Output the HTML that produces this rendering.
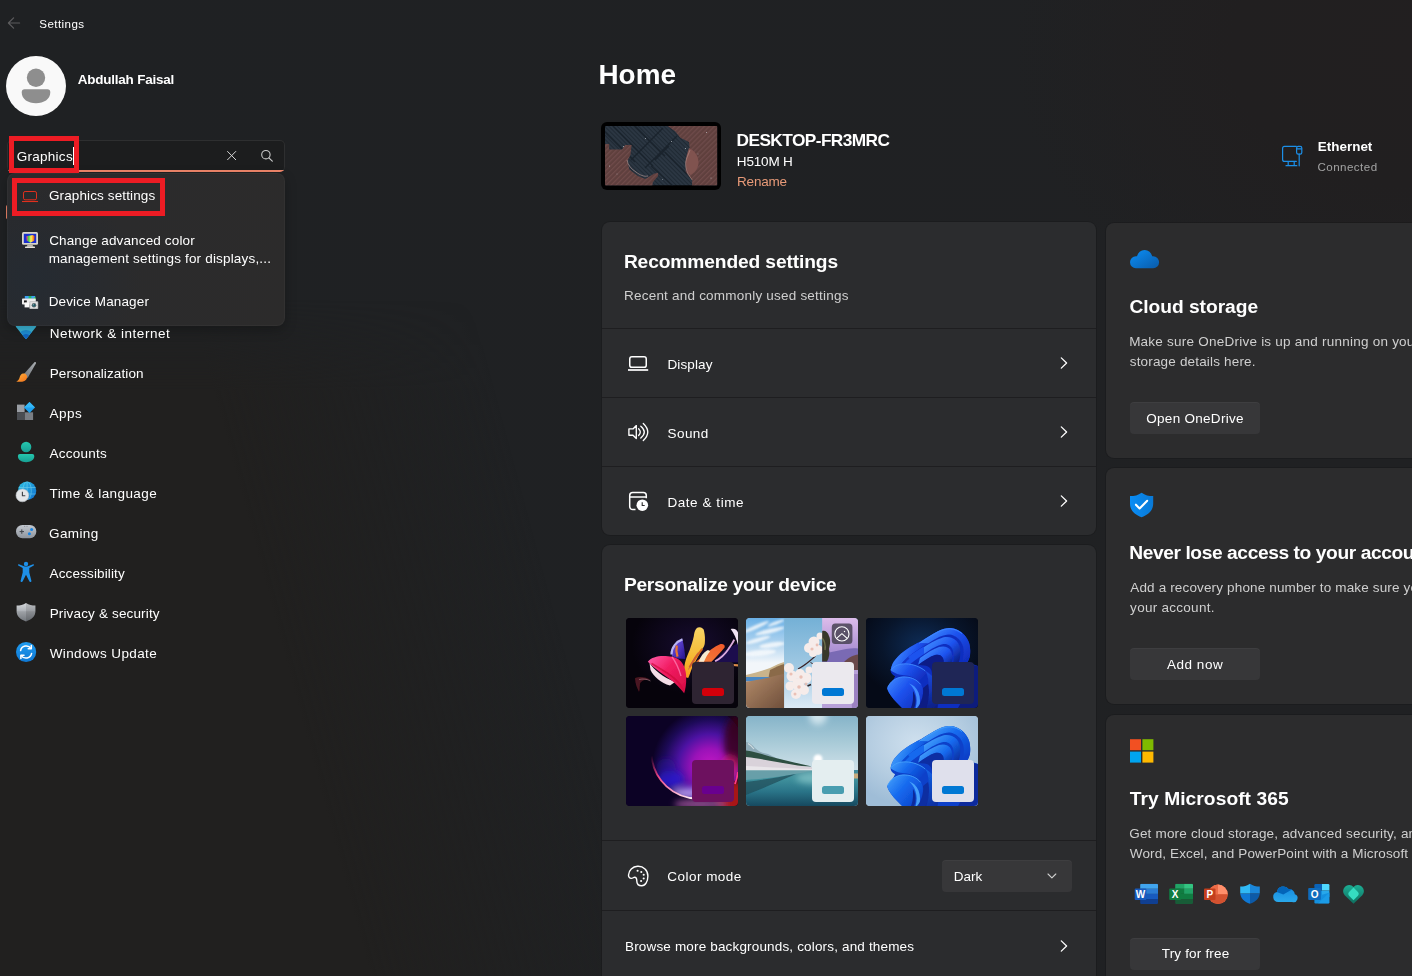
<!DOCTYPE html>
<html lang="en">
<head>
<meta charset="utf-8">
<title>Settings</title>
<style>
html,body{margin:0;padding:0}
body{width:1412px;height:976px;overflow:hidden;position:relative;background:#202020;font-family:"Liberation Sans",sans-serif;color:#fff}
#bg{position:absolute;left:0;top:0;width:1412px;height:976px;background:radial-gradient(ellipse 400px 300px at 1412px 50px,#221f20 0%,#211f20 45%,rgba(33,31,32,0) 100%),linear-gradient(90deg,#1f2123 0%,#202123 100%)}
#bg2{position:absolute;left:0;top:300px;width:700px;height:676px;background:linear-gradient(75deg,#21201f 0%,#21201f 42%,rgba(33,32,31,0) 74%);-webkit-mask-image:linear-gradient(180deg,transparent 0,#000 90px);mask-image:linear-gradient(180deg,transparent 0,#000 90px)}
.t{position:absolute;white-space:pre;line-height:1;color:#fff}
.abs{position:absolute}
#txt{position:absolute;left:0;top:0;width:1412px;height:976px;will-change:transform}
.card{position:absolute;background:#2b2c2e;border-radius:8px;box-shadow:0 0 0 1px rgba(0,0,0,.13)}
.div{position:absolute;height:1px;background:#1e1e20;left:602px;width:494px}
.btn{position:absolute;background:#373739;border-radius:4px;box-shadow:inset 0 1px 0 rgba(255,255,255,.04)}
.thumb{position:absolute;width:112px;height:90px;border-radius:4px;overflow:hidden}
.mini{position:absolute;left:66px;top:44px;width:42px;height:42px;border-radius:4px}
.mini i{position:absolute;left:10px;top:26px;width:22px;height:8px;border-radius:2.5px}
svg{position:absolute;overflow:visible}

</style>
</head>
<body>
<div id="bg"></div><div id="bg2"></div>

<!-- ===== main cards ===== -->
<div class="card" style="left:602px;top:222px;width:494.300px;height:313px"></div>
<div class="div" style="top:328px"></div>
<div class="div" style="top:397px"></div>
<div class="div" style="top:466px"></div>
<div class="card" style="left:602px;top:545px;width:494.300px;height:440px"></div>
<div class="div" style="top:840px"></div>
<div class="div" style="top:910px"></div>
<div class="card" style="left:1105.500px;top:223px;width:320px;height:235.300px;background:#2c2c2d"></div>
<div class="card" style="left:1105.500px;top:468.300px;width:320px;height:235.700px;background:#2c2c2d"></div>
<div class="card" style="left:1105.500px;top:715px;width:320px;height:280px;background:#2c2c2d"></div>

<!-- buttons -->
<div class="btn" style="left:1130px;top:402px;width:130px;height:32px"></div>
<div class="btn" style="left:1130px;top:648px;width:130px;height:32px"></div>
<div class="btn" style="left:1130px;top:938px;width:130px;height:32px"></div>
<div class="btn" style="left:942px;top:860px;width:130px;height:32px"></div>

<!-- ===== main icons (page-coordinate svg) ===== -->
<svg style="left:0;top:0" width="1412" height="976" viewBox="0 0 1412 976" fill="none">
<defs>
<linearGradient id="gCloud" x1="0" y1="0" x2="1" y2="1"><stop offset="0" stop-color="#0b8ff7"/><stop offset="1" stop-color="#0a5aa8"/></linearGradient>
<linearGradient id="gShield" x1="0" y1="0" x2="1" y2="0"><stop offset="0" stop-color="#0a8df5"/><stop offset="1" stop-color="#0979d6"/></linearGradient>
</defs>
<!-- back arrow -->
<path d="M19.6 23H8.6M13.6 17.8L8.4 23l5.2 5.2" stroke="#5c5c5e" stroke-width="1.2" stroke-linecap="round" stroke-linejoin="round"/>
<!-- ethernet -->
<g stroke="#1c8fe8" stroke-width="1.2" stroke-linecap="round" stroke-linejoin="round">
<path d="M1296.3 146.4H1284.6a2 2 0 0 0-2 2v11a2 2 0 0 0 2 2h11.7"/>
<path d="M1288.2 161.6v4M1294.2 161.6v4M1286 165.7h10.8"/>
<rect x="1296.6" y="146.3" width="5.2" height="7.8" rx="1.6"/>
<path d="M1297 148.9h4.4M1299.2 154.2v11.6"/>
</g>
<!-- display -->
<rect x="629.75" y="356.75" width="16.5" height="10.6" rx="2.2" stroke="#fff" stroke-width="1.5"/>
<path d="M628 370h20.2" stroke="#fff" stroke-width="1.7"/>
<!-- sound -->
<g stroke="#fff" stroke-width="1.35" stroke-linejoin="round" stroke-linecap="round">
<path d="M628.9 428.9h4.1l3.3-3.3v12.9l-3.3-3.3h-4.1z"/>
<path d="M638.6 428.7Q642 432 638.6 435.5M640.8 426.2Q647.8 432 640.8 438M643.3 423.4Q652.2 432 643.3 440.5"/>
</g>
<!-- date & time -->
<path d="M635.5 509.55H632.7a3 3 0 0 1-3-3V495.5a3 3 0 0 1 3-3h10.6a3 3 0 0 1 3 3v2.7M629.9 496.9h16.2" stroke="#fff" stroke-width="1.5"/>
<circle cx="642.3" cy="505.2" r="5.8" fill="#fff"/>
<path d="M642.2 502.3v3.2h2.5" stroke="#2b2b2d" stroke-width="1.1"/>
<!-- chevrons -->
<g stroke="#fff" stroke-width="1.3" stroke-linecap="round" stroke-linejoin="round">
<path d="M1061.3 357.9l5.3 5.1-5.3 5.1"/>
<path d="M1061.3 426.9l5.3 5.1-5.3 5.1"/>
<path d="M1061.3 495.9l5.3 5.1-5.3 5.1"/>
<path d="M1061.3 940.9l5.3 5.1-5.3 5.1"/>
</g>
<path d="M1048 874l3.9 3.9 3.9-3.9" stroke="#cfcfcf" stroke-width="1.1" stroke-linecap="round" stroke-linejoin="round"/>
<!-- palette -->
<path d="M637.6 866.3C643.5 866 648 870.5 647.9 876C647.8 881.5 645.5 885.8 641.8 885.8C638.5 885.8 636.8 883.8 636.8 881C636.8 879 636.6 877.4 635 877.2C633.5 877 633 878.4 631.4 878.4C629.5 878.4 628.4 876.8 628.5 875C628.8 870.5 632.5 866.5 637.6 866.3Z" stroke="#fff" stroke-width="1.4"/>
<g fill="#fff"><circle cx="637.6" cy="870.8" r="1.05"/><circle cx="641.3" cy="872" r="1.05"/><circle cx="643.7" cy="874.8" r="1.05"/><circle cx="643.7" cy="878.5" r="1.05"/><circle cx="641.1" cy="881" r="1.05"/></g>
<!-- cloud -->
<path d="M1136 268.3a6 6 0 0 1 0-12h1.1a7.6 7.6 0 0 1 15 0h1a6 6 0 0 1 0 12z" fill="url(#gCloud)"/>
<!-- shield -->
<path d="M1141.6 492.8c3.4 2.6 7.2 3.3 11.6 3.3v7.4c0 7-4.6 11.2-11.6 13.7c-7-2.500-11.600-6.700-11.600-13.700v-7.400c4.400 0 8.200-.7 11.600-3.300z" fill="url(#gShield)"/>
<path d="M1135.900 504.700l3.700 3.700 7.600-7.600" stroke="#fff" stroke-width="2.1" stroke-linecap="round" stroke-linejoin="round"/>
<!-- microsoft logo -->
<rect x="1130" y="739.200" width="11" height="11" fill="#f25022"/><rect x="1142.400" y="739.200" width="11" height="11" fill="#7fba00"/>
<rect x="1130" y="751.600" width="11" height="11" fill="#00a4ef"/><rect x="1142.400" y="751.600" width="11" height="11" fill="#ffb900"/>
</svg>

<!-- ===== office icons ===== -->
<svg style="left:0;top:0" width="1412" height="976" viewBox="0 0 1412 976">
<defs>
<linearGradient id="gOD" x1="0" y1="0" x2="0" y2="1"><stop offset="0" stop-color="#1588dd"/><stop offset="1" stop-color="#2aa9ec"/></linearGradient>
<linearGradient id="gFam" x1="0" y1="0" x2="0" y2="1"><stop offset="0" stop-color="#1cae94"/><stop offset="1" stop-color="#0f6d5e"/></linearGradient>
<clipPath id="cW"><rect x="1140.200" y="883.700" width="17.800" height="20.300" rx="1.200"/></clipPath>
<clipPath id="cX"><rect x="1175.200" y="883.700" width="17.800" height="20.300" rx="1.200"/></clipPath>
<clipPath id="cP"><circle cx="1218" cy="894.300" r="9.700"/></clipPath>
<clipPath id="cD"><path d="M1250 883.700c2.900 2 6 2.900 9.800 2.900v5.900c0 5.700-3.900 9.200-9.800 11.300c-5.900-2.100-9.800-5.600-9.800-11.300v-5.900c3.800 0 6.900-.9 9.800-2.900z"/></clipPath>
<clipPath id="cO"><rect x="1314.400" y="884" width="15" height="19.500" rx="1.200"/></clipPath>
</defs>
<!-- word -->
<g clip-path="url(#cW)"><rect x="1140" y="883.700" width="18.200" height="5.100" fill="#41a5ee"/><rect x="1140" y="888.800" width="18.200" height="5.100" fill="#2b7cd3"/><rect x="1140" y="893.900" width="18.200" height="5.100" fill="#185abd"/><rect x="1140" y="899" width="18.200" height="5.100" fill="#103f91"/></g>
<rect x="1134.700" y="888.400" width="11.700" height="11.600" rx="1" fill="#185abd"/>
<text x="1140.550" y="898" font-family="Liberation Sans, sans-serif" font-size="10" font-weight="700" fill="#fff" text-anchor="middle">W</text>
<!-- excel -->
<g clip-path="url(#cX)"><rect x="1175" y="883.700" width="9.200" height="5.100" fill="#21a366"/><rect x="1184.100" y="883.700" width="9.200" height="5.100" fill="#33c481"/><rect x="1175" y="888.800" width="9.200" height="5.100" fill="#107c41"/><rect x="1184.100" y="888.800" width="9.200" height="5.100" fill="#21a366"/><rect x="1175" y="893.900" width="18.200" height="5.100" fill="#107c41"/><rect x="1175" y="899" width="18.200" height="5.100" fill="#185c37"/></g>
<rect x="1169.200" y="888.400" width="11.700" height="11.600" rx="1" fill="#107c41"/>
<text x="1175.050" y="898" font-family="Liberation Sans, sans-serif" font-size="10" font-weight="700" fill="#fff" text-anchor="middle">X</text>
<!-- powerpoint -->
<g clip-path="url(#cP)"><rect x="1208" y="884" width="20" height="21" fill="#ed6c47"/><rect x="1218" y="884" width="10" height="10.300" fill="#ff8f6b"/><rect x="1208" y="894.300" width="20" height="10" fill="#d35230"/><rect x="1208" y="884" width="10" height="10.300" fill="#ed6c47"/></g>
<rect x="1204" y="888.400" width="11.500" height="11.600" rx="1" fill="#c43e1c"/>
<text x="1209.750" y="898" font-family="Liberation Sans, sans-serif" font-size="10" font-weight="700" fill="#fff" text-anchor="middle">P</text>
<!-- defender -->
<g clip-path="url(#cD)"><rect x="1240" y="883" width="10" height="10.600" fill="#30b9f5"/><rect x="1250" y="883" width="10" height="10.600" fill="#1a86d9"/><rect x="1240" y="893.600" width="10" height="11" fill="#0f78d4"/><rect x="1250" y="893.600" width="10" height="11" fill="#0d5aa7"/></g>
<!-- onedrive -->
<path d="M1278.200 902a5.100 5.100 0 0 1-1.300-10a6.600 6.600 0 0 1 11.900-2.800a5.300 5.300 0 0 1 6 5.100a4 4 0 0 1-2.700 7.700z" fill="url(#gOD)"/>
<path d="M1276.900 892a6.600 6.600 0 0 1 11.900-2.800a5.300 5.300 0 0 1 3.500.1l-9 5.100z" fill="#0364b8"/>
<!-- outlook -->
<g clip-path="url(#cO)"><rect x="1314" y="884" width="8" height="6.500" fill="#0a63b8"/><rect x="1322" y="884" width="8" height="6.500" fill="#50d9ff"/><rect x="1314" y="890.500" width="8" height="6.500" fill="#1490df"/><rect x="1322" y="890.500" width="8" height="6.500" fill="#28a8ea"/><path d="M1314 897l16-4.500v11.500h-16z" fill="#1490df"/><path d="M1318 903.500l11.400-11v11z" fill="#1b9be6"/></g>
<rect x="1308.200" y="888.100" width="12.700" height="11.800" rx="1" fill="#0f6cbd"/>
<text x="1314.550" y="897.800" font-family="Liberation Sans, sans-serif" font-size="10" font-weight="700" fill="#fff" text-anchor="middle">O</text>
<!-- family safety heart -->
<path d="M1353.500 903.800l-8.800-8.600a6 6 0 0 1 8.800-8.200a6 6 0 0 1 8.800 8.200z" fill="url(#gFam)"/>
<path d="M1353.500 887.500l4.200 4.300a3 3 0 0 1 0 4.200l-4.200 4.200-4.200-4.200a3 3 0 0 1 0-4.200z" fill="#35dcc0"/>
</svg>

<!-- ===== desktop preview ===== -->
<div class="abs" style="left:601px;top:122px;width:120px;height:67.500px;border-radius:6px;background:#000"></div>
<svg style="left:605px;top:126px" width="112.400" height="59.600" viewBox="0 0 112.400 59.600">
<defs>
<pattern id="pDiag" width="3" height="3" patternUnits="userSpaceOnUse" patternTransform="rotate(45)"><rect width="3" height="3" fill="#2b3642"/><rect width="3" height="1" fill="#1f2933"/></pattern>
<pattern id="pDiag2" width="3.500" height="3.500" patternUnits="userSpaceOnUse" patternTransform="rotate(-45)"><rect width="3.500" height="3.500" fill="#5f3f3e"/><rect width="3.500" height="1.200" fill="#704c4a"/></pattern>
<filter id="fS"><feGaussianBlur stdDeviation=".35"/></filter>
<clipPath id="cDesk"><rect width="112.400" height="59.600" rx="1"/></clipPath>
</defs>
<g clip-path="url(#cDesk)">
<rect width="112.400" height="59.600" fill="url(#pDiag)"/>
<g stroke="#18212a" stroke-width="1.400" opacity=".8"><path d="M0 6l30 30M8 0l40 40M30 0l30 30M58 2L26 34M72 10L40 42M46 40l22 20M60 26l22 22M50 34l14-14"/></g>
<g filter="url(#fS)">
<path d="M62.700 0L70.100 5.300 75.400 11.700 83.900 15.900 85 24.400 80.700 35.100 80.700 45.700 87.100 54.200 87.100 59.700H112.400V0z" fill="url(#pDiag2)"/>
<path d="M84 22c5 2 10 8 9.500 15c-.4 6-4 10-8 12c-3-3-5-8-4.800-13c.2-5 2-10 3.300-14z" fill="#80524f"/>
<path d="M0 18.100L4.200 18.100 4.200 23.400 17 23.400 20.200 19.100 26.600 19.100 25.500 28.700 22.300 35.100 24.400 43.600 32.900 49.900 40.400 53.100 48.900 47.800 53.100 46.700 53.100 49.900 47.800 56.300 47.300 59.700H0z" fill="url(#pDiag2)"/>
<path d="M22 34c1 5 4 9 9 12c4 3 8 5 12 4" stroke="#c9a9a4" stroke-width=".8" fill="none" opacity=".7"/>
<path d="M85 24c-2 6-5 10-4.300 16c.5 5 3 9 6.500 14" stroke="#c9a9a4" stroke-width=".8" fill="none" opacity=".55"/>
</g>
<g fill="#dfe6ec" opacity=".75"><circle cx="40.500" cy="12.600" r=".5"/><circle cx="66.500" cy="15.500" r=".5"/><circle cx="80.500" cy="22.500" r=".55"/><circle cx="18.500" cy="20.500" r=".5"/><circle cx="57.500" cy="53.500" r=".45"/><circle cx="101.500" cy="6.500" r=".5"/><circle cx="106" cy="52" r=".5"/><circle cx="4.500" cy="40" r=".5"/><circle cx="93" cy="28" r=".4"/><circle cx="12" cy="48" r=".4"/></g>
</g>
</svg>

<!-- ===== personalize thumbnails ===== -->
<svg width="0" height="0" style="left:0;top:0"><defs>
<filter id="fB1" x="-10%" y="-10%" width="120%" height="120%"><feGaussianBlur stdDeviation=".55"/></filter>
<filter id="fB2" x="-20%" y="-20%" width="140%" height="140%"><feGaussianBlur stdDeviation="1.300"/></filter>
<filter id="fB3" x="-30%" y="-30%" width="160%" height="160%"><feGaussianBlur stdDeviation="3"/></filter>
</defs></svg>

<!-- thumb 1: colourful bloom on black -->
<div class="thumb" style="left:626px;top:618px;background:#06030b">
<svg width="112" height="90" viewBox="0 0 112 90" style="left:0;top:0">
<defs>
<radialGradient id="t1bg" cx=".6" cy=".3" r=".55"><stop offset="0" stop-color="#170c30"/><stop offset="1" stop-color="#06030b"/></radialGradient>
<linearGradient id="t1pink" x1="22" y1="40" x2="58" y2="72" gradientUnits="userSpaceOnUse"><stop offset="0" stop-color="#ff5aa8"/><stop offset=".45" stop-color="#f21c62"/><stop offset="1" stop-color="#d80f48"/></linearGradient>
<linearGradient id="t1yel" x1="0" y1="0" x2="0" y2="1"><stop offset="0" stop-color="#f8d465"/><stop offset=".6" stop-color="#f6b832"/><stop offset="1" stop-color="#f59a1e"/></linearGradient>
<linearGradient id="t1or" x1="1" y1="0" x2="0" y2="1"><stop offset="0" stop-color="#f0582a"/><stop offset="1" stop-color="#f4803a"/></linearGradient>
<linearGradient id="t1vi" x1="0" y1="0" x2="1" y2="1"><stop offset="0" stop-color="#7a5af0"/><stop offset="1" stop-color="#24128a"/></linearGradient>
</defs>
<rect width="112" height="90" fill="url(#t1bg)"/>
<g filter="url(#fB1)">
<!-- far right: deep purple, lilac line, white curl -->
<path d="M98 33L112 25V44.500L88 44Z" fill="#1c0a4e"/>
<path d="M104.700 11.100C108 9.800 111 11.500 112 14.500V27C110.500 21 108 15.500 104.700 11.100Z" fill="#f1e4f3"/>
<path d="M89.100 43.300C95 40 99.500 35.500 102.500 30.900C105 27.500 107 24.500 108.200 21.700" stroke="#dcaadc" stroke-width="1.800" fill="none"/>
<path d="M100 45.500l12 .8v2.200l-10-1z" fill="#d98a4a"/>
<!-- blue/violet petal -->
<path d="M56.500 21.400C58 28 59 35 59.300 41L52 40.500 45.900 38C45.300 31 50 24 56.500 21.400Z" fill="url(#t1vi)"/>
<path d="M56.500 21.400C50.500 23.500 45.300 29.500 45.500 36.500" stroke="#b9b4f4" stroke-width="2.200" fill="none"/>
<path d="M50.800 27.400C50 31 50.300 35 51.500 38.700" stroke="#e8742e" stroke-width="2.200" fill="none"/>
<!-- orange petal + cream -->
<path d="M94 26.300C97 25.500 99.500 27 98.600 29.500C95 34 90 39 85.500 43.700H70L77.700 37.500C83 33 88.500 28.500 94 26.300Z" fill="url(#t1or)"/>
<path d="M72.800 43.700C74.500 38.500 77.500 34.500 81.300 32.300C82.500 32 83.500 32.500 84 33.500C81.500 36.500 79.500 40 78 43.700Z" fill="#f7ead0"/>
<!-- yellow petal -->
<path d="M67.800 18.200C68.500 12.500 70.500 9.300 73.100 9.300C76 9.300 78 11 78.100 13.200C79 17 79.200 21 78.800 25.200C78.500 27.500 77.500 29.500 76.300 30.900C73 37 69 44 66 50C64.500 54 63.500 57.500 62.200 60C59.500 60 57.500 57.500 57.900 53.600C58 50 58.500 46.500 59.300 43.700C60.500 39.500 62 36 63.600 32.300C65.300 27.500 66.800 23 67.800 18.200Z" fill="url(#t1yel)"/>
<path d="M76.300 30.900C72 36 67.500 42.500 63.600 49.300" stroke="#d4601c" stroke-width="2.200" fill="none" opacity=".9"/>
<path d="M72 34.500C68.500 39.500 65 45.500 62.500 51.500" stroke="#b8485a" stroke-width="1" fill="none" opacity=".65"/>
<!-- white underside + dark curl -->
<path d="M23.500 45C28 52 37 59 49 64L44 67.500C35 65 27.500 58.500 24.500 52Z" fill="#f3dde6"/>
<path d="M9 60C14 58 20 59 25 62C20 61 15 62 14 66C13.500 69 14 72 13 74C11 70 9 65 9 60Z" fill="#4a1520"/>
<path d="M13 61.500C17 60.500 21 61 24.500 63" stroke="#c8a0a8" stroke-width=".7" fill="none" opacity=".7"/>
<!-- pink petal -->
<path d="M21.800 43.700C23.500 41.500 25.800 40 28.200 39.400C31 38.500 34 38 37.400 38C40.500 38 43.500 38.200 45.900 38.700C49 39.300 51.500 40.500 53.700 42.200C55.500 43.800 57 45.800 57.900 47.900C59.500 52 60.300 56 60.200 60.200C60.300 66 59.500 71 58.200 75.300C54 70 49.500 65.500 45 62C38 57 29 51 21.800 43.700Z" fill="url(#t1pink)"/>
<path d="M25.500 45.500C32 49.500 39.500 53.500 46 58.500C51 62.500 55 67 57.800 72.500" stroke="#cf0a3a" stroke-width="1.800" fill="none" opacity=".7"/>
<path d="M45.900 38.700C50 44.500 53 51 55 58" stroke="#ff86ba" stroke-width="1.400" fill="none" opacity=".7"/>
</g>
</svg>
<div class="mini" style="background:#2e2432"><i style="background:#d3000a"></i></div>
</div>

<!-- thumb 2: spotlight collage -->
<div class="thumb" style="left:746px;top:618px;background:#8fbfe0">
<svg width="112" height="90" viewBox="0 0 112 90" style="left:0;top:0">
<defs>
<linearGradient id="t2a" x1="0" y1="0" x2="0" y2="1"><stop offset="0" stop-color="#6ab0e6"/><stop offset=".3" stop-color="#b4d6f0"/><stop offset=".5" stop-color="#f2f6fa"/></linearGradient>
<linearGradient id="t2b" x1="0" y1="0" x2="0" y2="1"><stop offset="0" stop-color="#74b0d6"/><stop offset=".6" stop-color="#a5cbe4"/><stop offset="1" stop-color="#dceaf5"/></linearGradient>
<linearGradient id="t2c" x1="0" y1="0" x2="0" y2="1"><stop offset="0" stop-color="#dcbcea"/><stop offset=".35" stop-color="#ad92d4"/><stop offset="1" stop-color="#b9a2da"/></linearGradient>
<linearGradient id="t2sand" x1="0" y1="0" x2="1" y2="1"><stop offset="0" stop-color="#b48c6a"/><stop offset="1" stop-color="#6f4f3b"/></linearGradient>
</defs>
<rect x="0" y="0" width="38.200" height="90" fill="url(#t2a)"/>
<g filter="url(#fB2)" opacity=".85" fill="#f6f9fc"><ellipse cx="10" cy="9" rx="14" ry="1.800" transform="rotate(-24 10 9)"/><ellipse cx="24" cy="13" rx="15" ry="2.200" transform="rotate(-14 24 13)"/><ellipse cx="12" cy="22" rx="13" ry="2" transform="rotate(-16 12 22)"/><ellipse cx="26" cy="27" rx="13" ry="2.600" transform="rotate(-8 26 27)"/><ellipse cx="14" cy="35" rx="16" ry="3" transform="rotate(-6 14 35)"/><ellipse cx="30" cy="5" rx="9" ry="1.500" transform="rotate(-20 30 5)"/></g>
<g filter="url(#fB1)">
<path d="M0 57C8 55 16 53 24 50C30 47 34 45 38.200 44V62H0Z" fill="#c9b48c"/>
<path d="M24 52C30 49 34 47 38.200 46V62L22 62Z" fill="#8a6a4a"/>
<rect x="0" y="59" width="24" height="4.500" fill="#4a88c4"/>
<path d="M0 63.500C8 62.500 16 61 23 59.500C28 58 33 57 38.200 56V90H0Z" fill="url(#t2sand)"/>
</g>
<rect x="38.200" y="0" width="38" height="90" fill="url(#t2b)"/>
<g filter="url(#fB1)">
<path d="M69.500 38C64 43 58 48 52 51" stroke="#3a2226" stroke-width="1.100" fill="none"/>
<path d="M64.500 44.500l2.500 1.300" stroke="#3a2226" stroke-width="1"/>
<g fill="#f6ecea"><circle cx="63" cy="30" r="5"/><circle cx="68" cy="24" r="5.500"/><circle cx="72" cy="32" r="5"/><circle cx="67" cy="35" r="4"/><circle cx="74" cy="18" r="3.500"/>
<circle cx="43" cy="50" r="5"/><circle cx="46" cy="58" r="5.500"/><circle cx="54" cy="56" r="5"/><circle cx="60" cy="60" r="5.500"/><circle cx="52" cy="66" r="6"/><circle cx="44" cy="68" r="4.500"/><circle cx="58" cy="72" r="5"/><circle cx="50" cy="76" r="5"/><circle cx="63" cy="52" r="3.500"/></g>
<g fill="#e8b9ac" opacity=".85"><circle cx="66" cy="31" r="1.600"/><circle cx="71" cy="27" r="1.400"/><circle cx="45" cy="56" r="1.600"/><circle cx="55" cy="59" r="1.700"/><circle cx="53" cy="69" r="1.800"/><circle cx="60" cy="66" r="1.500"/><circle cx="49" cy="76" r="1.500"/></g>
<path d="M61.500 68l3.500-1.500" stroke="#2a2226" stroke-width="1.600"/>
</g>
<rect x="76.200" y="0" width="36" height="90" fill="url(#t2c)"/>
<g filter="url(#fB1)">
<path d="M76.200 36C84 34 92 33 100 31C105 30 109 30 112 30.500V52H76.200Z" fill="#7a6ab4"/>
<path d="M98 44C103 39 108 37 112 36.500V56L100 54Z" fill="#6a4a4c"/>
<path d="M76.200 52H112V90H76.200Z" fill="#b7a0d8"/><path d="M104 56h8v34h-6z" fill="#8f74b8" opacity=".7"/>
<path d="M76.200 13C79 12 82 14 83 18C85 22 84 27 83 31C84 35 83 40 81 43.500H76.200Z" fill="#38392a"/>
<path d="M76.200 20C78 22 80 27 79 32" stroke="#6a6e4a" stroke-width="1.400" fill="none"/>
</g>
<rect x="85.800" y="5.500" width="20.600" height="20.600" rx="3.500" fill="#4c4658" opacity=".88"/>
<circle cx="95.900" cy="15.900" r="7.100" fill="none" stroke="#fff" stroke-width="1.100"/>
<path d="M90.600 20.300l5.300-4.600 5.300 4.600" fill="none" stroke="#fff" stroke-width="1.100" stroke-linejoin="round"/>
<circle cx="98.500" cy="13.500" r=".7" fill="#fff"/>
</svg>
<div class="mini" style="background:#ebe9ee"><i style="background:#0078d4"></i></div>
</div>

<!-- thumb 3: bloom dark -->
<div class="thumb t3" style="left:866px;top:618px;background:#060c1a">
<svg width="112" height="90" viewBox="0 0 112 90" style="left:0;top:0">
<defs><radialGradient id="t3bg" cx=".5" cy=".3" r=".6"><stop offset="0" stop-color="#0e2c56"/><stop offset=".6" stop-color="#08152b"/><stop offset="1" stop-color="#050a17"/></radialGradient><linearGradient id="t3_a" gradientUnits="userSpaceOnUse" x1="60" y1="15" x2="90" y2="50"><stop offset="0" stop-color="#3f8bff"/><stop offset="0.45" stop-color="#1d52ee"/><stop offset="1" stop-color="#112fc0"/></linearGradient><linearGradient id="t3_b" gradientUnits="userSpaceOnUse" x1="62" y1="22" x2="88" y2="50"><stop offset="0" stop-color="#3f8bff"/><stop offset="0.5" stop-color="#1d52ee"/><stop offset="1" stop-color="#091a7c"/></linearGradient><linearGradient id="t3_c" gradientUnits="userSpaceOnUse" x1="64" y1="28" x2="84" y2="50"><stop offset="0" stop-color="#3f8bff"/><stop offset="0.55" stop-color="#1d52ee"/><stop offset="1" stop-color="#091a7c"/></linearGradient><linearGradient id="t3_d" gradientUnits="userSpaceOnUse" x1="30" y1="40" x2="55" y2="62"><stop offset="0" stop-color="#3f8bff"/><stop offset="0.5" stop-color="#1d52ee"/><stop offset="1" stop-color="#112fc0"/></linearGradient><linearGradient id="t3_e" gradientUnits="userSpaceOnUse" x1="22" y1="60" x2="55" y2="88"><stop offset="0" stop-color="#3f8bff"/><stop offset="0.45" stop-color="#1d52ee"/><stop offset="1" stop-color="#112fc0"/></linearGradient><linearGradient id="t3_f" gradientUnits="userSpaceOnUse" x1="30" y1="30" x2="58" y2="44"><stop offset="0" stop-color="#3f8bff"/><stop offset="0.6" stop-color="#1d52ee"/><stop offset="1" stop-color="#112fc0"/></linearGradient><linearGradient id="t3_g" gradientUnits="userSpaceOnUse" x1="58" y1="50" x2="76" y2="90"><stop offset="0" stop-color="#1d52ee"/><stop offset="1" stop-color="#091a7c"/></linearGradient></defs>
<rect width="112" height="90" fill="url(#t3bg)"/>
<g filter="url(#fB1)"><!--bloom--><path fill="#112fc0" d="M21.1 70.3C24 67 27.5 62 29.1 58.2C26 56.5 24.6 54.5 24.6 52.2C25.5 47.5 27 44 29.6 41.2C33 37 37 34 41.2 31.1C46 28 50.5 25.5 55.2 23.1C61 19.5 66.5 16 72.3 13.1C76 11.2 80 10 84.3 10C89.5 10.5 93.5 12.3 96.4 15.1C100 18.5 102.3 22 103.4 26.1C104.3 30 104.5 34 103.9 38.2C103.3 40.5 102.5 42.5 101.4 44.2L112 48V90H36.1C32 86 28.5 82.5 26.1 79.3C23.5 76 21.8 73 21.1 70.3Z"/><path fill="#091a7c" d="M96 45L112 48V90H92C98 80 101 68 101 58C101 52 99 48 96 45Z"/><path fill="url(#t3_a)" d="M52 26C58 21.500 65 17 72.300 13.100C76 11.200 80 10 84.300 10C89.500 10.500 93.500 12.300 96.400 15.100C100 18.500 102.300 22 103.400 26.100C104.300 30 104.500 34 103.900 38.200C103.300 40.500 102.500 42.500 101.400 44.200L96 47C98 40 98.500 33 97 28C95 22 90.500 17.500 84 16.500C78 16 70 20 62 25.500Z"/><path fill="url(#t3_b)" d="M55 31C62 26 70 21.500 77 19.500C82 18.300 87 19.500 90.500 23C94 27 95 33 94 39.500C93.500 42.500 92.500 45 91 47.500L86 49C88 43 88.500 37 87 32.500C85.500 28 82 25.500 77.500 26C72 26.800 65 31 58 36Z"/><path fill="url(#t3_c)" d="M54 40C60 35.500 67 31 73 29C77.500 27.700 81.500 28.500 84 31.500C86.500 35 87 40 85.500 46C85 48 84 50 83 51.500L76 53C78 48 78.500 43.500 77 40C75.500 37 72.500 36 69 37C64 38.500 58 42.500 52 47Z"/><path fill="#091a7c" opacity=".85" d="M52 47C58 42.500 64 38.500 69 37C72.500 36 75.500 37 77 40C78.500 43.500 78 48 76 53L66 56C66 51 63 48 58 47.500Z"/><path fill="url(#t3_f)" d="M29.600 41.200C33 37 37 34 41.200 31.100C45.500 28.300 49 26.300 52 24.800L62 25.500C55 29.500 48 34 42 39C38 42.500 35 46 33 50C30 49.500 27 50 24.600 52.200C25.500 47.500 27 44 29.600 41.200Z"/><path fill="#1d52ee" d="M33 50C35 46 38 42.500 42 39C47 35 52.500 31.500 58 28.500L58 36C52 40 46.500 44 42 48C39.500 50 38 52 37 54C35.500 52.500 34.500 51 33 50Z"/><path fill="#112fc0" opacity=".7" d="M33 50C35 46 38 42.500 42 39L43.500 40.500C40 43.500 37 47 35.500 51Z"/><path fill="url(#t3_d)" d="M24.600 52.200C27.500 48 33 45.500 40 45.800C47 46 54 48.500 59.500 53C62.500 55.500 64 59 63.500 63C63 67 60.500 71 57 75C56 66 50 58.500 41 57.500C35 57 29 56 24.600 52.200Z"/><path fill="url(#t3_e)" d="M21.100 70.300C23.500 64 29 59.500 36.500 58.800C44 58.300 51 61 55 66.500C57.500 70.500 57.500 76 55.500 82C54.500 85 53 88 51 90H36.100C32 86 28.500 82.500 26.100 79.300C23.500 76 21.800 73 21.100 70.300Z"/><path fill="#3f8bff" d="M43 65.500C47 66.500 50.500 69.500 52.500 74.500C54.500 80 54.500 85.500 53 90H49.500C51 85 51 80 49.500 75.500C48.500 71.500 46 68 43 65.500Z"/><path fill="#091a7c" d="M47 73C49 76 50 80 49.500 84.500C49.300 86.500 48.800 88.500 48 90H45C46.500 86 47.200 82 47 78Z"/><path fill="url(#t3_g)" d="M59.500 53C65 56 69.500 61 71.500 68C73.500 75 73.500 83 71.500 90H59C62.500 83 63.800 76 63 69C62.500 64 62.500 58.500 59.500 53Z"/><path fill="#091a7c" opacity=".9" d="M55.500 82C57 78 57.500 74 57 70L62 66C63.500 72 63.500 80 60.500 90H51C53 88 54.500 85 55.500 82Z"/><g fill="none" stroke="#3f8bff" stroke-opacity=".9" stroke-width="1"><path d="M25.300 51.600C28.500 47.600 33.500 45.600 40 45.900C47 46.100 54 48.600 59.300 53"/><path d="M21.800 69.300C24.500 63.500 29.500 59.600 36.500 59C44 58.500 50.500 61.200 54.500 66.300"/><path d="M53 25.300C59 21.500 66 17 72.600 13.600C76.200 11.800 80.200 10.700 84.300 10.700C89 11.200 93 12.900 95.900 15.600"/></g></g>
</svg>
<div class="mini" style="background:#1f2656"><i style="background:#0078d4"></i></div>
</div>

<!-- thumb 4: glow -->
<div class="thumb" style="left:626px;top:716px;background:#0c0225">
<svg width="112" height="90" viewBox="0 0 112 90" style="left:0;top:0">
<defs>
<radialGradient id="t4d" cx="84" cy="50" r="58" gradientUnits="userSpaceOnUse"><stop offset="0" stop-color="#c418c4"/><stop offset=".3" stop-color="#9a12b8"/><stop offset=".55" stop-color="#4c12a2"/><stop offset=".8" stop-color="#1d0a58"/><stop offset="1" stop-color="#0c0225"/></radialGradient>
<linearGradient id="t4arc" x1="25" y1="40" x2="70" y2="84" gradientUnits="userSpaceOnUse"><stop offset="0" stop-color="#ff3a7a" stop-opacity="0"/><stop offset=".3" stop-color="#ff4a8a" stop-opacity=".9"/><stop offset=".75" stop-color="#ffc0d8"/><stop offset="1" stop-color="#fff"/></linearGradient>
<clipPath id="t4c"><circle cx="72" cy="36" r="46.500"/></clipPath>
</defs>
<rect width="112" height="90" fill="#0c0225"/>
<g filter="url(#fB3)"><ellipse cx="106" cy="84" rx="16" ry="20" fill="#a81212"/><ellipse cx="74" cy="88" rx="26" ry="5" fill="#8a4a8a"/><ellipse cx="112" cy="20" rx="14" ry="22" fill="#300418"/></g>
<g clip-path="url(#t4c)">
<rect width="112" height="90" fill="url(#t4d)"/>
<g filter="url(#fB3)"><ellipse cx="44" cy="63" rx="13" ry="9" fill="#2a18d0" opacity=".85"/><ellipse cx="62" cy="77" rx="16" ry="5" fill="#c0a8f4" opacity=".85"/><ellipse cx="110" cy="26" rx="12" ry="26" fill="#3a0418" opacity=".85"/><ellipse cx="104" cy="52" rx="10" ry="12" fill="#e02078" opacity=".65"/><ellipse cx="40" cy="52" rx="10" ry="10" fill="#2a10a0" opacity=".5"/></g>
</g>
<g filter="url(#fB1)"><path d="M25.600 40A46.500 46.500 0 0 0 72 82.500" fill="none" stroke="url(#t4arc)" stroke-width="1.800"/>
<path d="M112 56C111.500 60 110.500 64 109 68" stroke="#ff3a8a" stroke-width="1.800" fill="none"/></g>
</svg>
<div class="mini" style="background:#6d115f"><i style="background:#69008f"></i></div>
</div>

<!-- thumb 5: lake -->
<div class="thumb" style="left:746px;top:716px;background:#9cc4d4">
<svg width="112" height="90" viewBox="0 0 112 90" style="left:0;top:0">
<defs>
<linearGradient id="t5s" x1="0" y1="0" x2="0" y2="1"><stop offset="0" stop-color="#86b4c9"/><stop offset=".5" stop-color="#a9cbd8"/><stop offset="1" stop-color="#cfe0e8"/></linearGradient>
<linearGradient id="t5w" x1="0" y1="0" x2="0" y2="1"><stop offset="0" stop-color="#4f909c"/><stop offset=".25" stop-color="#3f909c"/><stop offset=".6" stop-color="#2a7488"/><stop offset="1" stop-color="#16495f"/></linearGradient>
</defs>
<rect width="112" height="54" fill="url(#t5s)"/>
<rect y="54" width="112" height="36" fill="url(#t5w)"/>
<g filter="url(#fB3)"><circle cx="72" cy="0" r="9" fill="#dfeef4" opacity=".8"/><ellipse cx="70" cy="62" rx="20" ry="6" fill="#86c4c8" opacity=".75"/></g>
<g filter="url(#fB2)"><circle cx="72" cy="43" r="4.500" fill="#fff"/></g>
<g filter="url(#fB1)">
<path d="M0 26C3 26.500 6 28 9 32C12 35 16 37 22 38L30 42 0 42Z" fill="#8fabb8"/><path d="M2 27.500C4 28.500 6 30.500 8 33" stroke="#dfe8ec" stroke-width="1.200" fill="none" opacity=".8"/>
<path d="M0 34.500C8 35.500 16 38 24 40.500C34 43 46 45.800 56 48.300L66 50.500 0 50Z" fill="#2f4f42"/>
<path d="M0 41C10 42 22 44.200 34 46.500C46 48.800 58 50.500 68 51.500L68 54H0Z" fill="#d9d2da"/>
<path d="M0 50C20 51 44 52.500 68 53V54.500H0Z" fill="#e9e6ea"/>
<path d="M0 54.500H68C50 58 30 62 0 64Z" fill="#6fa4ac" opacity=".8"/>
<path d="M0 66C16 64 34 61 50 58C36 64 18 72 0 79Z" fill="#1f4f5c" opacity=".75"/>
<path d="M108 57.500h4v5h-4.500z" fill="#c9aa7c"/><path d="M106 54h6v3h-6z" fill="#3f8a9c"/>
</g>
</svg>
<div class="mini" style="background:#e4eef0"><i style="background:#489db0"></i></div>
</div>

<!-- thumb 6: bloom light -->
<div class="thumb t6" style="left:866px;top:716px;background:#b7cfe2">
<svg width="112" height="90" viewBox="0 0 112 90" style="left:0;top:0">
<defs><radialGradient id="t6bg" cx=".45" cy=".3" r=".7"><stop offset="0" stop-color="#cfe0ee"/><stop offset=".6" stop-color="#b5cde1"/><stop offset="1" stop-color="#9fbdd7"/></radialGradient><linearGradient id="t6_a" gradientUnits="userSpaceOnUse" x1="60" y1="15" x2="90" y2="50"><stop offset="0" stop-color="#45a0fb"/><stop offset="0.45" stop-color="#1569ee"/><stop offset="1" stop-color="#0b40c9"/></linearGradient><linearGradient id="t6_b" gradientUnits="userSpaceOnUse" x1="62" y1="22" x2="88" y2="50"><stop offset="0" stop-color="#45a0fb"/><stop offset="0.5" stop-color="#1569ee"/><stop offset="1" stop-color="#0a2b9c"/></linearGradient><linearGradient id="t6_c" gradientUnits="userSpaceOnUse" x1="64" y1="28" x2="84" y2="50"><stop offset="0" stop-color="#45a0fb"/><stop offset="0.55" stop-color="#1569ee"/><stop offset="1" stop-color="#0a2b9c"/></linearGradient><linearGradient id="t6_d" gradientUnits="userSpaceOnUse" x1="30" y1="40" x2="55" y2="62"><stop offset="0" stop-color="#45a0fb"/><stop offset="0.5" stop-color="#1569ee"/><stop offset="1" stop-color="#0b40c9"/></linearGradient><linearGradient id="t6_e" gradientUnits="userSpaceOnUse" x1="22" y1="60" x2="55" y2="88"><stop offset="0" stop-color="#45a0fb"/><stop offset="0.45" stop-color="#1569ee"/><stop offset="1" stop-color="#0b40c9"/></linearGradient><linearGradient id="t6_f" gradientUnits="userSpaceOnUse" x1="30" y1="30" x2="58" y2="44"><stop offset="0" stop-color="#45a0fb"/><stop offset="0.6" stop-color="#1569ee"/><stop offset="1" stop-color="#0b40c9"/></linearGradient><linearGradient id="t6_g" gradientUnits="userSpaceOnUse" x1="58" y1="50" x2="76" y2="90"><stop offset="0" stop-color="#1569ee"/><stop offset="1" stop-color="#0a2b9c"/></linearGradient></defs>
<rect width="112" height="90" fill="url(#t6bg)"/>
<g filter="url(#fB1)"><!--bloom--><path fill="#0b40c9" d="M21.1 70.3C24 67 27.5 62 29.1 58.2C26 56.5 24.6 54.5 24.6 52.2C25.5 47.5 27 44 29.6 41.2C33 37 37 34 41.2 31.1C46 28 50.5 25.5 55.2 23.1C61 19.5 66.5 16 72.3 13.1C76 11.2 80 10 84.3 10C89.5 10.5 93.5 12.3 96.4 15.1C100 18.5 102.3 22 103.4 26.1C104.3 30 104.5 34 103.9 38.2C103.3 40.5 102.5 42.5 101.4 44.2L112 48V90H36.1C32 86 28.5 82.5 26.1 79.3C23.5 76 21.8 73 21.1 70.3Z"/><path fill="#0a2b9c" d="M96 45L112 48V90H92C98 80 101 68 101 58C101 52 99 48 96 45Z"/><path fill="url(#t6_a)" d="M52 26C58 21.500 65 17 72.300 13.100C76 11.200 80 10 84.300 10C89.500 10.500 93.500 12.300 96.400 15.100C100 18.500 102.300 22 103.400 26.100C104.300 30 104.500 34 103.900 38.200C103.300 40.500 102.500 42.500 101.400 44.200L96 47C98 40 98.500 33 97 28C95 22 90.500 17.500 84 16.500C78 16 70 20 62 25.500Z"/><path fill="url(#t6_b)" d="M55 31C62 26 70 21.500 77 19.500C82 18.300 87 19.500 90.500 23C94 27 95 33 94 39.500C93.500 42.500 92.500 45 91 47.500L86 49C88 43 88.500 37 87 32.500C85.500 28 82 25.500 77.500 26C72 26.800 65 31 58 36Z"/><path fill="url(#t6_c)" d="M54 40C60 35.500 67 31 73 29C77.500 27.700 81.500 28.500 84 31.500C86.500 35 87 40 85.500 46C85 48 84 50 83 51.500L76 53C78 48 78.500 43.500 77 40C75.500 37 72.500 36 69 37C64 38.500 58 42.500 52 47Z"/><path fill="#0a2b9c" opacity=".85" d="M52 47C58 42.500 64 38.500 69 37C72.500 36 75.500 37 77 40C78.500 43.500 78 48 76 53L66 56C66 51 63 48 58 47.500Z"/><path fill="url(#t6_f)" d="M29.600 41.200C33 37 37 34 41.200 31.100C45.500 28.300 49 26.300 52 24.800L62 25.500C55 29.500 48 34 42 39C38 42.500 35 46 33 50C30 49.500 27 50 24.600 52.200C25.500 47.500 27 44 29.600 41.200Z"/><path fill="#1569ee" d="M33 50C35 46 38 42.500 42 39C47 35 52.500 31.500 58 28.500L58 36C52 40 46.500 44 42 48C39.500 50 38 52 37 54C35.500 52.500 34.500 51 33 50Z"/><path fill="#0b40c9" opacity=".7" d="M33 50C35 46 38 42.500 42 39L43.500 40.500C40 43.500 37 47 35.500 51Z"/><path fill="url(#t6_d)" d="M24.600 52.200C27.500 48 33 45.500 40 45.800C47 46 54 48.500 59.500 53C62.500 55.500 64 59 63.500 63C63 67 60.500 71 57 75C56 66 50 58.500 41 57.500C35 57 29 56 24.600 52.200Z"/><path fill="url(#t6_e)" d="M21.100 70.300C23.500 64 29 59.500 36.500 58.800C44 58.300 51 61 55 66.500C57.500 70.500 57.500 76 55.500 82C54.500 85 53 88 51 90H36.100C32 86 28.500 82.500 26.100 79.300C23.500 76 21.800 73 21.100 70.300Z"/><path fill="#45a0fb" d="M43 65.500C47 66.500 50.500 69.500 52.500 74.500C54.500 80 54.500 85.500 53 90H49.500C51 85 51 80 49.500 75.500C48.500 71.500 46 68 43 65.500Z"/><path fill="#0a2b9c" d="M47 73C49 76 50 80 49.500 84.500C49.300 86.500 48.800 88.500 48 90H45C46.500 86 47.200 82 47 78Z"/><path fill="url(#t6_g)" d="M59.500 53C65 56 69.500 61 71.500 68C73.500 75 73.500 83 71.500 90H59C62.500 83 63.800 76 63 69C62.500 64 62.500 58.500 59.500 53Z"/><path fill="#0a2b9c" opacity=".9" d="M55.500 82C57 78 57.500 74 57 70L62 66C63.500 72 63.500 80 60.500 90H51C53 88 54.500 85 55.500 82Z"/><g fill="none" stroke="#45a0fb" stroke-opacity=".9" stroke-width="1"><path d="M25.300 51.600C28.500 47.600 33.500 45.600 40 45.900C47 46.100 54 48.600 59.300 53"/><path d="M21.800 69.300C24.500 63.500 29.500 59.600 36.500 59C44 58.500 50.500 61.200 54.500 66.300"/><path d="M53 25.300C59 21.500 66 17 72.600 13.600C76.200 11.800 80.200 10.700 84.300 10.700C89 11.200 93 12.900 95.900 15.600"/></g></g>
</svg>
<div class="mini" style="background:#dfe0ec"><i style="background:#0078d4"></i></div>
</div>

<!-- ===== sidebar ===== -->
<!-- avatar -->
<div class="abs" style="left:6px;top:56px;width:60px;height:60px;border-radius:50%;background:#f9f9f9"></div>
<svg style="left:6px;top:56px" width="60" height="60" viewBox="0 0 60 60"><circle cx="30" cy="21.8" r="9.2" fill="#8e8e8e"/><path d="M15.7 36.2 a3 3 0 0 1 3-3 h22.6 a3 3 0 0 1 3 3 c0 7-6.5 11-14.3 11 s-14.3-4-14.3-11z" fill="#8e8e8e"/></svg>
<!-- selected nav pill sliver -->
<div class="abs" style="left:6px;top:205px;width:3px;height:14px;border-radius:2px;background:#f0866a"></div>
<!-- search box -->
<div class="abs" style="left:7px;top:140px;width:278px;height:32px;border-radius:5px;background:#1c1d1e;box-shadow:inset 0 0 0 1px #2e2f30;overflow:hidden"><div class="abs" style="left:0;bottom:0;width:278px;height:2px;background:#f0866a"></div></div>
<!-- wifi (sits under dropdown) -->
<svg style="left:0;top:0" width="60" height="360" viewBox="0 0 60 360"><defs><clipPath id="cWifi"><path d="M26 339.300L15.600 326.600Q26 318.500 36.400 326.600Z"/></clipPath></defs><g clip-path="url(#cWifi)"><circle cx="26" cy="339.300" r="17" fill="#3bb8da"/><circle cx="26" cy="339.300" r="9.400" fill="#1f8fd6"/><circle cx="26" cy="339.300" r="5.400" fill="#1267c2"/></g></svg>
<!-- dropdown -->
<div class="abs" style="left:7px;top:173px;width:278px;height:153px;border-radius:8px;background:radial-gradient(ellipse 110px 90px at 25px 105px,#252b32 0%,rgba(37,43,50,0) 100%),linear-gradient(100deg,#2a2a2c 0%,#2b2b2c 40%,#2c2b2b 100%);box-shadow:0 4px 12px rgba(0,0,0,.25),inset 0 0 0 1px rgba(255,255,255,.03)"></div>
<!-- red annotation boxes -->
<div class="abs" style="left:9px;top:136px;width:60px;height:27px;border:5px solid #ed1c24"></div>
<div class="abs" style="left:12px;top:178px;width:143px;height:28px;border:5px solid #ed1c24"></div>
<!-- caret -->
<div class="abs" style="left:73px;top:146.5px;width:1px;height:18.5px;background:#fff"></div>

<!-- ===== sidebar icons ===== -->
<svg style="left:0;top:0" width="300" height="976" viewBox="0 0 300 976" fill="none">
<defs>
<linearGradient id="gHandle" x1="1" y1="0" x2="0" y2="1"><stop offset="0" stop-color="#a9adb2"/><stop offset="1" stop-color="#6e7378"/></linearGradient>
<linearGradient id="gBr" x1="0" y1="0" x2="1" y2="1"><stop offset="0" stop-color="#ffb13b"/><stop offset="1" stop-color="#f2711c"/></linearGradient>
<linearGradient id="gAcc" x1="0" y1="0" x2="0" y2="1"><stop offset="0" stop-color="#25c7ae"/><stop offset="1" stop-color="#17a094"/></linearGradient>
<linearGradient id="gGlobe" x1="0" y1="0" x2="1" y2="1"><stop offset="0" stop-color="#2fc1e3"/><stop offset="1" stop-color="#0f6fd0"/></linearGradient>
<linearGradient id="gPad" x1="0" y1="0" x2="0" y2="1"><stop offset="0" stop-color="#c3c8cf"/><stop offset="1" stop-color="#8e949c"/></linearGradient>
<linearGradient id="gSh" x1="0" y1="0" x2="0" y2="1"><stop offset="0" stop-color="#d5d8dc"/><stop offset="1" stop-color="#7d8288"/></linearGradient>
<linearGradient id="gUp" x1="0" y1="0" x2="0" y2="1"><stop offset="0" stop-color="#1f9cf0"/><stop offset="1" stop-color="#0f78d4"/></linearGradient>
<linearGradient id="gRb" x1="0" y1="0" x2="1" y2="0"><stop offset="0" stop-color="#ff2a7a"/><stop offset=".3" stop-color="#35e04a"/><stop offset=".55" stop-color="#fff35a"/><stop offset=".8" stop-color="#ff9a2a"/><stop offset="1" stop-color="#c02a2a"/></linearGradient>
<clipPath id="cGl"><circle cx="27.100" cy="490.800" r="9.200"/></clipPath>
</defs>
<!-- clear X / search -->
<path d="M227.300 151.200l8.700 8.800M236 151.200l-8.700 8.800" stroke="#d6d6d6" stroke-width="1"/>
<circle cx="265.900" cy="154.700" r="4.200" stroke="#cacaca" stroke-width="1.100"/><path d="M268.900 157.900l3.400 3.200" stroke="#cacaca" stroke-width="1.200" stroke-linecap="round"/>
<!-- graphics settings (red laptop) -->
<rect x="23.500" y="191.500" width="13" height="8.300" rx="1.600" stroke="#e0301e" stroke-width="1"/><path d="M22 201.500h16" stroke="#e0301e" stroke-width="1.100"/>
<!-- color management -->
<rect x="22" y="232" width="16" height="12.800" rx="1.500" fill="#d9d5ca"/><rect x="23.800" y="233.800" width="12.400" height="9.200" fill="#1a2fd0"/>
<path d="M26.300 236.200l6.500-1.200 2 1.200-.6 4.600-3.800 1.900-3.700-2.300z" fill="url(#gRb)"/>
<path d="M27.500 244.800h5l.8 2h-6.600z" fill="#bdb9ae"/><rect x="25" y="246.600" width="10" height="1.500" rx=".7" fill="#e4e1d8"/>
<!-- device manager -->
<rect x="24.800" y="296" width="10.400" height="2.800" fill="#3aa0f2"/><rect x="28.600" y="296" width="2.800" height="2.800" fill="#20b868"/><rect x="33.800" y="297.400" width="1.800" height="1.600" fill="#2fd63c"/>
<rect x="22" y="298.600" width="13.800" height="6" rx=".8" fill="#ececec"/><rect x="24" y="300.400" width="2.800" height="2.200" fill="#1c1c1c"/><rect x="24.600" y="302.600" width="5" height="4.800" fill="#fbfbfb"/>
<rect x="29.400" y="301.200" width="8.800" height="7.800" rx=".8" fill="#bdbdbd"/><rect x="30.300" y="302.100" width="7" height="6" fill="#e2e2e2"/><circle cx="34" cy="305.200" r="2.300" fill="#5a6a70"/><circle cx="34" cy="305.200" r="1.300" fill="#1d5a64"/><circle cx="33.500" cy="304.700" r=".5" fill="#9fd0d8"/>
<!-- personalization brush -->
<path d="M34.400 362.300c1-.6 2 .3 1.500 1.300L27.600 378l-4.300-3.200z" fill="url(#gHandle)"/>
<path d="M22.800 373.600c2.700-.5 4.900 1.700 4.200 4.300c-.9 3.200-5.200 4.600-10.800 3.600c2.400-.9 2.800-2.100 3.400-4c.6-1.900 1.400-3.500 3.200-3.900z" fill="url(#gBr)"/>
<!-- apps -->
<rect x="17" y="404.600" width="7.600" height="7.600" fill="#9a9ea4"/><rect x="17" y="412.300" width="7.600" height="7.700" fill="#4a4d52"/><rect x="24.700" y="412.300" width="8.400" height="7.700" fill="#7a7e84"/>
<path d="M29.500 402l5.500 5.500-5.500 5.500-5.500-5.500z" fill="#1da1f2"/><path d="M29.500 402l5.500 5.500h-11z" fill="#35b8f6"/>
<!-- accounts -->
<circle cx="26.100" cy="447" r="5.200" fill="url(#gAcc)"/><path d="M17.900 456.100a2 2 0 0 1 2-2h12.400a2 2 0 0 1 2 2c0 4-3.700 6.200-8.200 6.200s-8.200-2.200-8.200-6.200z" fill="url(#gAcc)"/>
<!-- time & language -->
<circle cx="27.100" cy="490.800" r="9.200" fill="url(#gGlobe)"/>
<g clip-path="url(#cGl)" stroke="#7fd8ee" stroke-width=".7" opacity=".7"><ellipse cx="27.100" cy="490.800" rx="4.200" ry="9.200"/><path d="M17 487.500h20M17 494h20M27.100 481v20"/></g>
<circle cx="22.400" cy="495.400" r="6.400" fill="#e3e5e8"/><circle cx="22.400" cy="495.400" r="6.400" fill="none" stroke="#b9bdc2" stroke-width=".6"/>
<path d="M22.400 491.800v3.900h2.900" stroke="#3b3f45" stroke-width="1.100"/>
<!-- gaming -->
<rect x="16" y="525" width="20.300" height="13.200" rx="6.400" fill="url(#gPad)"/>
<path d="M19.600 531.600h4.400M21.800 529.400v4.400" stroke="#3f444b" stroke-width="1"/><circle cx="31.600" cy="529.400" r="1.500" fill="#1683e3"/><circle cx="29.400" cy="533.700" r="1.500" fill="#1683e3"/><circle cx="24.800" cy="526.300" r=".45" fill="#50555c"/><circle cx="27" cy="526.300" r=".45" fill="#50555c"/>
<!-- accessibility -->
<g fill="#1e90e8"><circle cx="26" cy="563.900" r="2.200"/><path d="M18.300 565.600c-.6-.3-.4-1.500.6-1.300l5.100 1.900c1.300.5 2.700.5 4 0l5.100-1.900c1-.2 1.200 1 .6 1.300l-4.400 2.400v4.600l2.100 8.100c.3 1.200-1.600 1.900-2.100.5L26 574.700l-3.300 6.500c-.5 1.400-2.400.7-2.100-.5l2.100-8.100V568z"/></g>
<!-- privacy shield -->
<path d="M26 602.900c2.900 2 5.800 2.700 9.400 2.700v5.700c0 5.200-3.800 8.300-9.400 10.100c-5.600-1.800-9.400-4.900-9.400-10.100v-5.700c3.600 0 6.500-.7 9.400-2.700z" fill="url(#gSh)"/>
<path d="M26 602.900c2.900 2 5.800 2.700 9.400 2.700v5.700c0 5.200-3.800 8.300-9.400 10.100z" fill="#000" opacity=".12"/><path d="M16.600 611.300h18.800c0 5.200-3.800 8.300-9.400 10.100c-5.600-1.800-9.400-4.900-9.400-10.100z" fill="#000" opacity=".08"/>
<!-- windows update -->
<circle cx="26.100" cy="652" r="10.100" fill="url(#gUp)"/>
<g stroke="#fff" stroke-width="1.500" stroke-linecap="round" stroke-linejoin="round"><path d="M20.600 650.600a5.700 5.700 0 0 1 10.300-2.200M31.600 653.400a5.700 5.700 0 0 1-10.300 2.200"/><path d="M31.300 645.600v3.100h-3.100M20.900 658.400v-3.100h3.100"/></g>
</svg>


<div id="txt">
<span class="t" style="left:39.37px;top:18.70px;font-size:11.58px;letter-spacing:0.403px">Settings</span>
<span class="t" style="left:77.66px;top:72.92px;font-size:13.44px;letter-spacing:-0.190px;font-weight:700">Abdullah Faisal</span>
<span class="t" style="left:16.69px;top:149.76px;font-size:13.51px;letter-spacing:0.276px">Graphics</span>
<span class="t" style="left:48.89px;top:189.01px;font-size:13.51px;letter-spacing:0.129px">Graphics settings</span>
<span class="t" style="left:49.15px;top:233.91px;font-size:13.51px;letter-spacing:0.149px">Change advanced color</span>
<span class="t" style="left:48.63px;top:251.91px;font-size:13.51px;letter-spacing:0.177px">management settings for displays,...</span>
<span class="t" style="left:48.65px;top:294.91px;font-size:13.51px;letter-spacing:0.154px">Device Manager</span>
<span class="t" style="left:49.66px;top:326.91px;font-size:13.51px;letter-spacing:0.534px">Network &amp; internet</span>
<span class="t" style="left:49.66px;top:366.91px;font-size:13.51px;letter-spacing:0.117px">Personalization</span>
<span class="t" style="left:49.60px;top:406.91px;font-size:13.51px;letter-spacing:0.462px">Apps</span>
<span class="t" style="left:49.60px;top:446.91px;font-size:13.51px;letter-spacing:0.246px">Accounts</span>
<span class="t" style="left:49.49px;top:486.91px;font-size:13.51px;letter-spacing:0.402px">Time &amp; language</span>
<span class="t" style="left:49.03px;top:526.91px;font-size:13.51px;letter-spacing:0.400px">Gaming</span>
<span class="t" style="left:49.60px;top:566.91px;font-size:13.51px;letter-spacing:0.130px">Accessibility</span>
<span class="t" style="left:49.66px;top:606.91px;font-size:13.51px;letter-spacing:0.156px">Privacy &amp; security</span>
<span class="t" style="left:49.69px;top:646.91px;font-size:13.51px;letter-spacing:0.383px">Windows Update</span>
<span class="t" style="left:598.40px;top:60.82px;font-size:27.86px;letter-spacing:0.072px;font-weight:700">Home</span>
<span class="t" style="left:736.55px;top:131.62px;font-size:17.28px;letter-spacing:-0.569px;font-weight:700">DESKTOP-FR3MRC</span>
<span class="t" style="left:736.85px;top:154.91px;font-size:13.51px;letter-spacing:-0.176px">H510M H</span>
<span class="t" style="left:737.10px;top:174.91px;font-size:13.51px;letter-spacing:-0.227px;color:#e89a78">Rename</span>
<span class="t" style="left:1317.82px;top:139.92px;font-size:13.44px;letter-spacing:0.003px;font-weight:700">Ethernet</span>
<span class="t" style="left:1317.43px;top:161.50px;font-size:11.58px;letter-spacing:0.463px;color:#a3a3a3">Connected</span>
<span class="t" style="left:623.89px;top:252.00px;font-size:19.2px;letter-spacing:-0.115px;font-weight:700">Recommended settings</span>
<span class="t" style="left:624.04px;top:288.86px;font-size:13.51px;letter-spacing:0.211px;color:#cfcfcf">Recent and commonly used settings</span>
<span class="t" style="left:667.44px;top:358.01px;font-size:13.51px;letter-spacing:0.116px">Display</span>
<span class="t" style="left:667.49px;top:426.76px;font-size:13.51px;letter-spacing:0.452px">Sound</span>
<span class="t" style="left:667.44px;top:495.76px;font-size:13.51px;letter-spacing:0.554px">Date &amp; time</span>
<span class="t" style="left:623.89px;top:574.95px;font-size:19.2px;letter-spacing:-0.263px;font-weight:700">Personalize your device</span>
<span class="t" style="left:667.25px;top:869.76px;font-size:13.51px;letter-spacing:0.479px">Color mode</span>
<span class="t" style="left:953.66px;top:869.76px;font-size:13.51px;letter-spacing:0.006px">Dark</span>
<span class="t" style="left:625.03px;top:939.76px;font-size:13.51px;letter-spacing:0.164px">Browse more backgrounds, colors, and themes</span>
<span class="t" style="left:1129.51px;top:297.00px;font-size:19.2px;letter-spacing:-0.033px;font-weight:700">Cloud storage</span>
<span class="t" style="left:1129.15px;top:334.81px;font-size:13.51px;letter-spacing:0.234px;color:#cfcfcf">Make sure OneDrive is up and running on your PC. Check your</span>
<span class="t" style="left:1129.75px;top:354.86px;font-size:13.51px;letter-spacing:0.172px;color:#cfcfcf">storage details here.</span>
<span class="t" style="left:1146.31px;top:411.76px;font-size:13.51px;letter-spacing:0.283px">Open OneDrive</span>
<span class="t" style="left:1129.23px;top:543.00px;font-size:19.2px;letter-spacing:-0.409px;font-weight:700">Never lose access to your account</span>
<span class="t" style="left:1130.27px;top:581.01px;font-size:13.51px;letter-spacing:0.150px;color:#cfcfcf">Add a recovery phone number to make sure you can always get back into</span>
<span class="t" style="left:1130.11px;top:600.86px;font-size:13.51px;letter-spacing:0.276px;color:#cfcfcf">your account.</span>
<span class="t" style="left:1166.88px;top:658.01px;font-size:13.51px;letter-spacing:0.547px">Add now</span>
<span class="t" style="left:1129.83px;top:788.90px;font-size:19.2px;letter-spacing:0.058px;font-weight:700">Try Microsoft 365</span>
<span class="t" style="left:1129.26px;top:826.96px;font-size:13.51px;letter-spacing:0.181px;color:#cfcfcf">Get more cloud storage, advanced security, and premium apps like</span>
<span class="t" style="left:1129.81px;top:846.76px;font-size:13.51px;letter-spacing:0.127px;color:#cfcfcf">Word, Excel, and PowerPoint with a Microsoft 365 Family trial.</span>
<span class="t" style="left:1161.74px;top:947.01px;font-size:13.51px;letter-spacing:0.177px">Try for free</span>
</div>
</body>
</html>
